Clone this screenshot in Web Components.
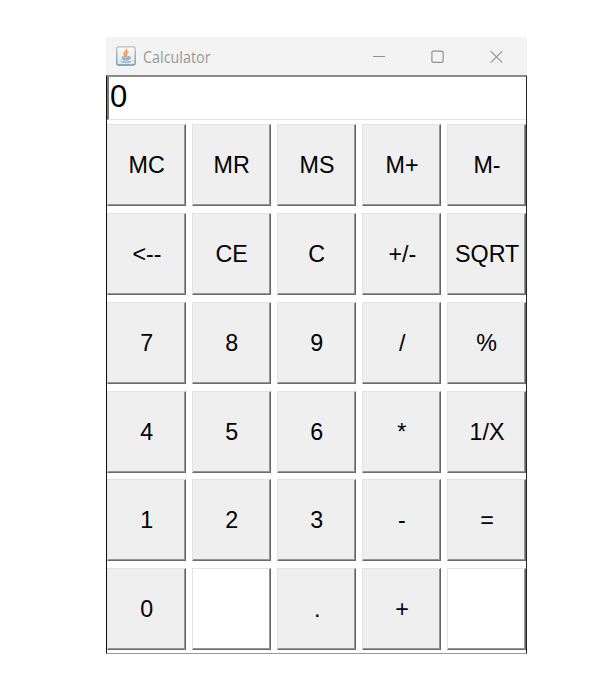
<!DOCTYPE html>
<html lang="en"><head><meta charset="utf-8"><title>Calculator</title>
<style>body{margin:0;background:#fff}</style></head><body>
<calc-window></calc-window>
<script>
const define=(name,html,setup)=>customElements.define(name,class extends HTMLElement{
  constructor(){super();const t=document.createElement('template');t.innerHTML=html;
    this.attachShadow({mode:'open'}).append(t.content.cloneNode(true));if(setup)setup(this.shadowRoot)}
});
define('java-icon',`<style>:host{display:block;width:20px;height:20px}svg{display:block}</style>
<svg width="20" height="20" viewBox="0 0 20 20" fill="none">
<defs><linearGradient id="g" x1="0" y1="0" x2="0" y2="1"><stop stop-color="#fbfbfb"/><stop offset="1" stop-color="#dde4e9"/></linearGradient>
<linearGradient id="b" x1="0" y1="0" x2="0" y2="1"><stop stop-color="#b4c0c9"/><stop offset="1" stop-color="#718fa5"/></linearGradient></defs>
<rect x=".8" y=".8" width="18.4" height="18.2" rx="1.8" fill="url(#g)" stroke="url(#b)" stroke-width="1.3"/>
<path d="M10.5 3.4C11.2 5.2 7.6 6.1 8 7.8c.2.9 1.2 1.3 1.4 2.1M12.1 5.9C9.9 7 10 7.7 10.5 8.5c.3.5.1.9-.3 1.3" stroke="#e9924d" stroke-width="1.4" stroke-linecap="round"/>
<path d="M6.2 11h6.8M6.6 12.4c1.8.6 4.3.6 6 0M7.2 13.8c1.4.5 3.5.5 4.8 0M5 15.1c-1.2 1.3 7.5 1.8 9.6.4M13 10.9c2.4-.3 2 1.8-.2 2.3" stroke="#7897b0" stroke-width="1" stroke-linecap="round"/>
</svg>`);
define('window-controls',`<style>:host{display:flex;gap:46px}svg{display:block}</style>
<svg width="13" height="14" fill="none" stroke="#929292"><path d="M1 6.5h12"/></svg>
<svg width="13" height="14" fill="none" stroke="#929292" stroke-width="1.2"><rect x=".9" y="1.1" width="11.2" height="11.2" rx="1.4"/></svg>
<svg width="13" height="14" fill="none" stroke="#929292" stroke-width="1.1"><path d="M.7 1.2l11.6 11.4M12.3 1.2L.7 12.6"/></svg>`);
define('title-bar',`<style>:host{display:flex;align-items:center;box-sizing:border-box;height:38px;padding:0 24px 0 10px;background:#f3f3f3;color:#969696;font:15.6px/20px "Open Sans","Noto Sans",sans-serif}
span{margin-left:7px;flex:1;padding-top:2px}.t{display:inline-block;margin:0;padding:0;transform-origin:0 50%;transform:scaleX(.92)}window-controls{margin-top:1px}</style>
<java-icon></java-icon><span><span class="t"><slot></slot></span></span><window-controls></window-controls>`);
define('calc-display',`<style>:host{display:block;box-sizing:border-box;height:43px;border:solid;border-width:0 0 1px 2px;border-color:#e3e3e3 #e3e3e3 #e3e3e3 #777;padding:1px 0 0 1px;color:#000;font:31px/38px "Liberation Sans",sans-serif}</style><slot></slot>`);
define('calc-key',`<style>:host{display:flex;align-items:center;justify-content:center;box-sizing:border-box;background:#efefef;border:solid;border-width:1px 1px 1px 1px;border-color:#e3e3e3 #646464 #6c6c6c #e3e3e3;box-shadow:inset -1px -1px #969696;min-width:0;color:#000;font:24px/28px "Liberation Sans",sans-serif;white-space:nowrap}
:host([blank]){background:#fff}span{margin-left:1px;transform:scaleX(.97)}</style><span><slot></slot></span>`);
define('key-pad',`<style>:host{display:grid;grid-template-columns:repeat(5,79px);grid-auto-rows:82px;column-gap:6px;row-gap:6.8px;padding-top:4.2px}</style><slot></slot>`);
define('calc-window',`<style>:host{display:block;width:421px;margin:37px 0 0 106px}
main{box-sizing:border-box;height:579px;border:solid;border-width:2px 1px 1px 1px;border-color:#8c8c8c #222 #999 #111;overflow:hidden}</style>
<title-bar>Calculator</title-bar><main><calc-display>0</calc-display><key-pad></key-pad></main>`,root=>{
  for(const label of ['MC','MR','MS','M+','M-','<--','CE','C','+/-','SQRT','7','8','9','/','%','4','5','6','*','1/X','1','2','3','-','=','0','','.','+','']){
    const key=document.createElement('calc-key');key.textContent=label;if(!label)key.setAttribute('blank','');root.querySelector('key-pad').append(key);
  }
});
</script></body></html>
